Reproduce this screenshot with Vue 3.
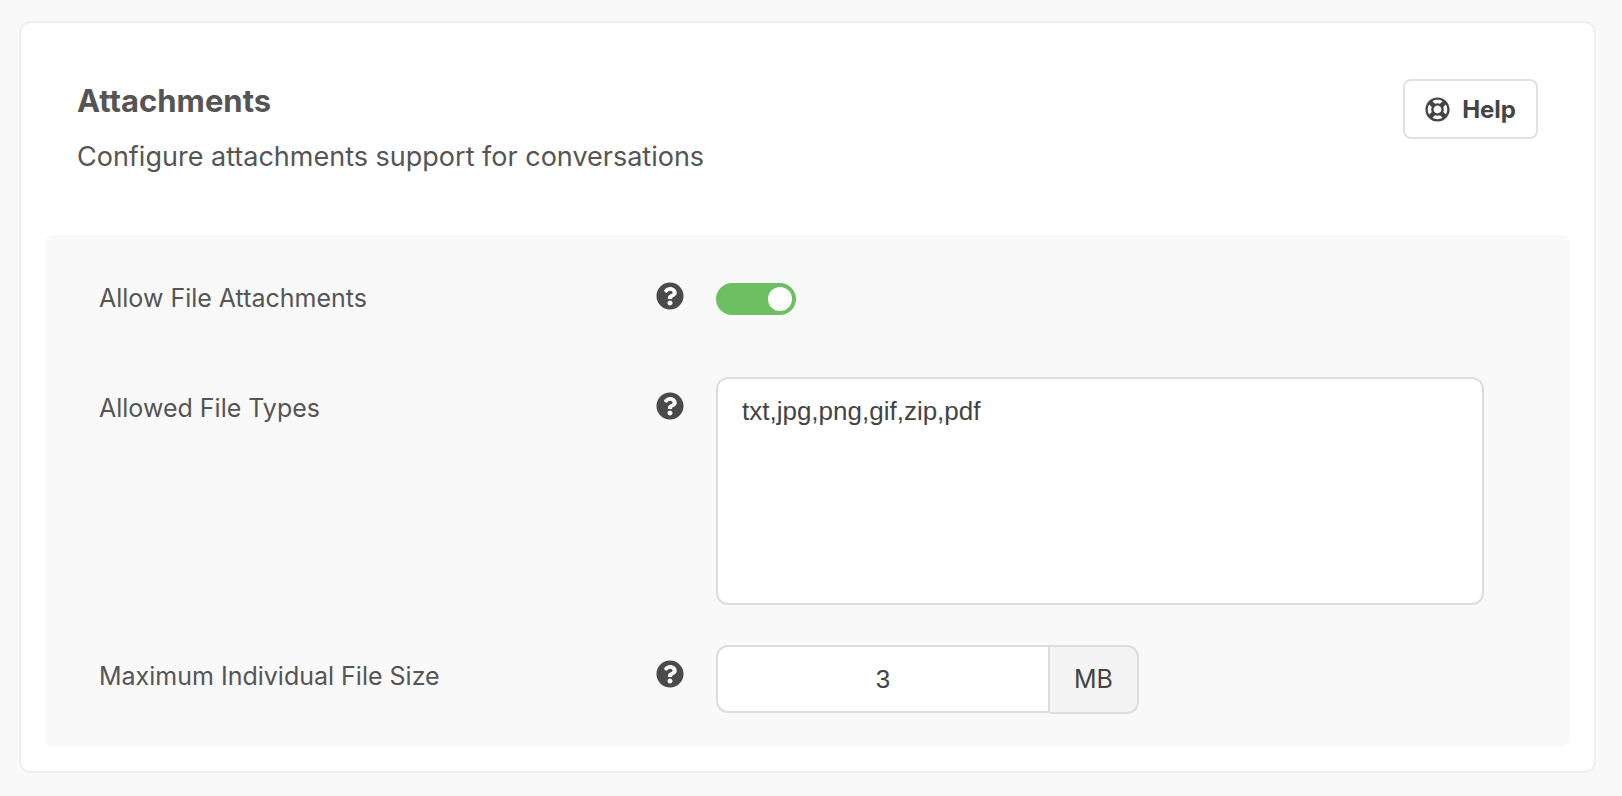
<script setup>
import { ref } from 'vue'

const allowed = ref(true)
const types = ref('txt,jpg,png,gif,zip,pdf')
const maxSize = ref('3')
const questionPath =
  'M504 256c0 136.997-111.043 248-248 248S8 392.997 8 256C8 119.083 119.043 8 256 8s248 111.083 248 248zM262.655 90c-54.497 0-89.255 22.957-116.549 63.758-3.536 5.286-2.353 12.415 2.715 16.258l34.699 26.31c5.205 3.947 12.621 3.008 16.665-2.122 17.864-22.658 30.113-35.797 57.303-35.797 20.429 0 45.698 13.148 45.698 32.958 0 14.976-12.363 22.667-32.534 33.976C247.128 238.528 216 254.941 216 296v4c0 6.627 5.373 12 12 12h56c6.627 0 12-5.373 12-12v-1.333c0-28.462 83.186-29.647 83.186-106.667 0-58.002-60.165-102-116.531-102zM256 338c-25.365 0-46 20.635-46 46 0 25.364 20.635 46 46 46s46-20.636 46-46c0-25.365-20.635-46-46-46z'
</script>

<template>
  <main class="card">
    <header class="head">
      <div>
        <h1 class="title">Attachments</h1>
        <p class="subtitle">Configure attachments support for conversations</p>
      </div>
      <button type="button" class="help">
        <svg class="help-icon" viewBox="0 0 512 512" aria-hidden="true">
          <path
            d="M256 504c136.967 0 248-111.033 248-248S392.967 8 256 8 8 119.033 8 256s111.033 248 248 248zm-103.398-76.72l53.411-53.411c31.806 13.506 68.128 13.522 99.974 0l53.411 53.411c-63.217 38.319-143.579 38.319-206.796 0zM336 256c0 44.112-35.888 80-80 80s-80-35.888-80-80 35.888-80 80-80 80 35.888 80 80zm91.28 103.398l-53.411-53.411c13.505-31.806 13.522-68.128 0-99.974l53.411-53.411c38.319 63.217 38.319 143.579 0 206.796zM359.397 84.72l-53.411 53.411c-31.806-13.505-68.128-13.522-99.973 0L152.602 84.72c63.217-38.319 143.579-38.319 206.795 0zM84.72 152.602l53.411 53.411c-13.506 31.806-13.522 68.128 0 99.974L84.72 359.398c-38.319-63.217-38.319-143.579 0-206.796z"
          />
        </svg>
        Help
      </button>
    </header>

    <form class="panel" @submit.prevent>
      <div class="row">
        <div class="name">
          <label for="allow">Allow File Attachments</label>
          <svg class="tip" viewBox="0 0 512 512" aria-hidden="true"><path :d="questionPath" /></svg>
        </div>
        <div class="field switch-field">
          <input id="allow" v-model="allowed" type="checkbox" role="switch" class="switch" />
        </div>
      </div>

      <div class="row">
        <div class="name">
          <label for="types">Allowed File Types</label>
          <svg class="tip" viewBox="0 0 512 512" aria-hidden="true"><path :d="questionPath" /></svg>
        </div>
        <div class="field">
          <textarea id="types" v-model="types" class="types" spellcheck="false"></textarea>
        </div>
      </div>

      <div class="row">
        <div class="name">
          <label for="size">Maximum Individual File Size</label>
          <svg class="tip" viewBox="0 0 512 512" aria-hidden="true"><path :d="questionPath" /></svg>
        </div>
        <div class="field group">
          <input id="size" v-model="maxSize" type="text" inputmode="numeric" class="size" />
          <span class="unit">MB</span>
        </div>
      </div>
    </form>
  </main>
</template>

<style>
body {
  background: #f9f9f9;
}
</style>

<style scoped>
.card {
  box-sizing: border-box;
  margin: 21px 26px 23px 19px;
  padding: 24px;
  background: #fff;
  border: 2px solid #efefef;
  border-radius: 12px;
  color: #555;
  font-family: Inter, "Liberation Sans", sans-serif;
}
.head {
  display: flex;
  justify-content: space-between;
  align-items: flex-start;
  padding: 32px 32px 56px;
}
.title {
  margin: 0;
  font-size: 31px;
  line-height: 44px;
  font-weight: 700;
}
.subtitle {
  margin: 12px 0 0;
  font-size: 27px;
  line-height: 44px;
}
.help {
  display: flex;
  align-items: center;
  gap: 12px;
  height: 60px;
  padding: 0 20px;
  background: #fff;
  border: 2px solid #e1e1e1;
  border-radius: 8px;
  color: #444;
  font-family: inherit;
  font-size: 24px;
  font-weight: 700;
}
.help-icon {
  width: 25px;
  height: 25px;
  fill: #444;
}
.panel {
  display: flex;
  flex-direction: column;
  gap: 40px;
  padding: 32px 86px 33px 54px;
  background: #f9f9f9;
  border-radius: 8px;
}
.row {
  display: grid;
  grid-template-columns: 617fr 768fr;
}
.name {
  display: flex;
  justify-content: space-between;
  align-items: flex-start;
  padding: 15px 32px 0 0;
  font-size: 25px;
  line-height: 32px;
}
.tip {
  flex: none;
  width: 28px;
  height: 28px;
  fill: #4a4a4a;
}
.field {
  display: flex;
  align-items: flex-start;
}
.switch-field {
  padding: 16px 0 22px;
}
.switch {
  appearance: none;
  display: flex;
  width: 80px;
  height: 32px;
  margin: 0;
  padding: 4px;
  box-sizing: border-box;
  border-radius: 16px;
  background: #ccc;
}
.switch::before {
  content: "";
  width: 24px;
  height: 24px;
  border-radius: 50%;
  background: #fff;
}
.switch:checked {
  justify-content: flex-end;
  background: #6dc061;
}
.types,
.size {
  box-sizing: border-box;
  margin: 0;
  border: 2px solid #ddd;
  background: #fff;
  color: #444;
  font-family: "Liberation Sans", Arial, sans-serif;
  font-size: 26px;
}
.types {
  width: 100%;
  height: 228px;
  padding: 16px 24px;
  border-radius: 12px;
  line-height: 32px;
  resize: none;
}
.size {
  width: 334px;
  height: 68px;
  padding: 0 12px;
  border-radius: 12px 0 0 12px;
  text-align: center;
}
.unit {
  box-sizing: border-box;
  padding: 0 24px;
  border: 2px solid #ddd;
  border-left: 0;
  border-radius: 0 12px 12px 0;
  background: #f4f4f4;
  color: #444;
  font-size: 25px;
  line-height: 65px;
}
</style>
